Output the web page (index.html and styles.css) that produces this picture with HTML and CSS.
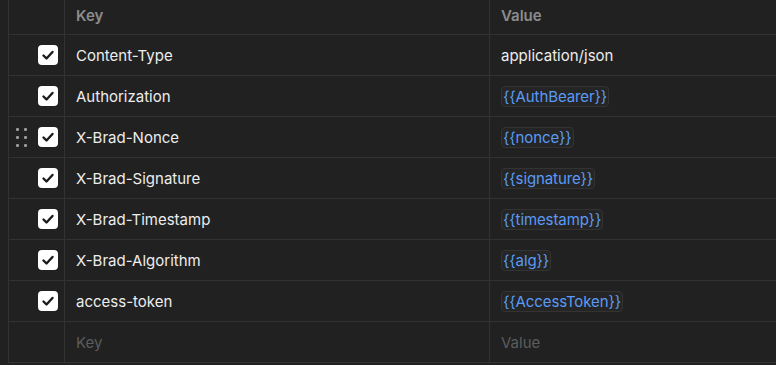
FILE: index.html
```html
<!DOCTYPE html>
<html>
<head>
<meta charset="utf-8">
<link rel="stylesheet" href="styles.css">
</head>
<body>
<div class="table">
  <div class="row head">
    <div class="c-check"></div>
    <div class="c-key">Key</div>
    <div class="c-val">Value</div>
  </div>
  <div class="row">
    <div class="c-check"><span class="cb"><svg viewBox="0 0 20 20"><path d="M5.5 10.5 L8.5 13.5 L14.5 7" /></svg></span></div>
    <div class="c-key">Content-Type</div>
    <div class="c-val">application/json</div>
  </div>
  <div class="row">
    <div class="c-check"><span class="cb"><svg viewBox="0 0 20 20"><path d="M5.5 10.5 L8.5 13.5 L14.5 7" /></svg></span></div>
    <div class="c-key">Authorization</div>
    <div class="c-val"><span class="var">{{AuthBearer}}</span></div>
  </div>
  <div class="row">
    <div class="c-check"><span class="handle"><i></i><i></i><i></i><i></i><i></i><i></i></span><span class="cb"><svg viewBox="0 0 20 20"><path d="M5.5 10.5 L8.5 13.5 L14.5 7" /></svg></span></div>
    <div class="c-key">X-Brad-Nonce</div>
    <div class="c-val"><span class="var">{{nonce}}</span></div>
  </div>
  <div class="row">
    <div class="c-check"><span class="cb"><svg viewBox="0 0 20 20"><path d="M5.5 10.5 L8.5 13.5 L14.5 7" /></svg></span></div>
    <div class="c-key">X-Brad-Signature</div>
    <div class="c-val"><span class="var">{{signature}}</span></div>
  </div>
  <div class="row">
    <div class="c-check"><span class="cb"><svg viewBox="0 0 20 20"><path d="M5.5 10.5 L8.5 13.5 L14.5 7" /></svg></span></div>
    <div class="c-key">X-Brad-Timestamp</div>
    <div class="c-val"><span class="var">{{timestamp}}</span></div>
  </div>
  <div class="row">
    <div class="c-check"><span class="cb"><svg viewBox="0 0 20 20"><path d="M5.5 10.5 L8.5 13.5 L14.5 7" /></svg></span></div>
    <div class="c-key">X-Brad-Algorithm</div>
    <div class="c-val"><span class="var">{{alg}}</span></div>
  </div>
  <div class="row">
    <div class="c-check"><span class="cb"><svg viewBox="0 0 20 20"><path d="M5.5 10.5 L8.5 13.5 L14.5 7" /></svg></span></div>
    <div class="c-key">access-token</div>
    <div class="c-val"><span class="var">{{AccessToken}}</span></div>
  </div>
  <div class="row">
    <div class="c-check"></div>
    <div class="c-key ph">Key</div>
    <div class="c-val ph">Value</div>
  </div>
</div>
</body>
</html>
```

FILE: styles.css
```css
* { box-sizing: border-box; }
html, body {
  margin: 0;
  padding: 0;
  background: #212121;
  height: 100%;
  overflow: hidden;
}
body {
  font-family: Inter, "Noto Sans", sans-serif;
  font-size: 15px;
  color: #ededed;
}
.table {
  margin-left: 8px;
  width: calc(100% - 8px);
  border-left: 1px solid #323232;
}
.row {
  display: grid;
  grid-template-columns: 55px 425px 1fr;
  height: 41px;
  border-bottom: 1px solid #323232;
}
.row.head {
  height: 35px;
  font-weight: 600;
  color: #8c8c8c;
}
.row.head > div {
  padding-bottom: 4px;
}
.row > div {
  display: flex;
  align-items: center;
}
.c-key, .c-val {
  border-left: 1px solid #323232;
  padding-left: 11px;
}
.c-check {
  position: relative;
  padding-left: 29px;
}
.cb {
  width: 20px;
  height: 20px;
  background: #ffffff;
  border-radius: 4px;
  display: block;
}
.cb svg {
  width: 20px;
  height: 20px;
  display: block;
}
.cb path {
  fill: none;
  stroke: #1b1b1b;
  stroke-width: 2.4;
  stroke-linecap: round;
  stroke-linejoin: round;
}
.handle {
  position: absolute;
  left: 7px;
  top: 11px;
  display: grid;
  grid-template-columns: 3px 3px;
  column-gap: 5px;
  row-gap: 5px;
}
.handle i {
  display: block;
  width: 3px;
  height: 3px;
  border-radius: 1px;
  background: #9a9a9a;
}
.var {
  color: #5a9bf6;
  background: #252525;
  border: 1px solid #333333;
  border-radius: 4px;
  padding: 0 1px;
  line-height: 19px;
  letter-spacing: -0.1px;
}
.ph {
  color: #5c5c5c;
}
```
